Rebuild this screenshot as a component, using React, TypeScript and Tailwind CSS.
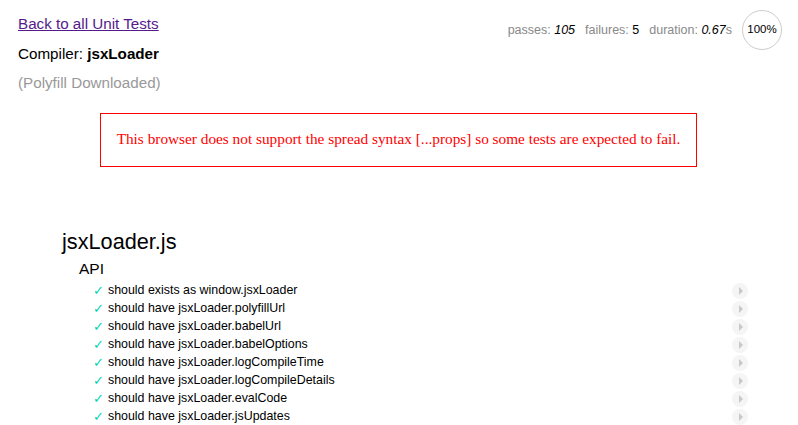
import React from "react";

const tests = [
  "should exists as window.jsxLoader",
  "should have jsxLoader.polyfillUrl",
  "should have jsxLoader.babelUrl",
  "should have jsxLoader.babelOptions",
  "should have jsxLoader.logCompileTime",
  "should have jsxLoader.logCompileDetails",
  "should have jsxLoader.evalCode",
  "should have jsxLoader.jsUpdates",
];

export default function App() {
  return (
    <div className="w-[798px] h-[425px] overflow-hidden bg-white font-['Liberation_Sans',Arial,sans-serif] text-black">
      <div className="flex justify-between">
        <div className="pl-[18px] pt-[9px] text-[15.2px] leading-[29.5px]">
          <div>
            <a href="#" className="text-[#551a8b] underline">Back to all Unit Tests</a>
          </div>
          <div>
            Compiler: <b>jsxLoader</b>
          </div>
          <div className="text-[#999]">(Polyfill Downloaded)</div>
        </div>
        <div className="flex items-center pt-[10px] pr-[16px] h-[50px] text-[12.5px] text-[#888]">
          <span>passes: <em className="text-black">105</em></span>
          <span className="ml-[10px]">failures: <em className="text-black not-italic">5</em></span>
          <span className="ml-[10px]">duration: <em className="text-black">0.67</em>s</span>
          <div className="ml-[10px] w-[40px] h-[40px] rounded-full border border-[#ccc] flex items-center justify-center text-[11.5px] text-black">
            100%
          </div>
        </div>
      </div>
      <div className="ml-[100px] mt-[15px] w-[597px] h-[54px] border border-[#f00] flex items-center justify-center font-['Liberation_Serif','Times_New_Roman',serif] text-[15.3px] text-[#f00]">
        This browser does not support the spread syntax [...props] so some tests are expected to fail.
      </div>
      <div className="ml-[62px] mt-[62px] w-[686px]">
        <div className="text-[21.7px] leading-[26px]">jsxLoader.js</div>
        <div className="ml-[17px] mt-[4px] text-[15.5px] leading-[20px]">API</div>
        <div className="mt-[3px]">
          {tests.map((t) => (
            <div key={t} className="flex items-center h-[18px] pl-[31px]">
              <span className="text-[#00d6b2] text-[13px] w-[15px] font-['DejaVu_Sans',sans-serif] font-light">✓</span>
              <span className="text-[12.4px]">{t}</span>
              <span className="ml-auto w-[16px] h-[16px] rounded-full bg-[#f5f5f5] flex items-center justify-center">
                <span className="ml-[2px] w-0 h-0 border-y-[4px] border-y-transparent border-l-[4px] border-l-[#c8c8c8]" />
              </span>
            </div>
          ))}
        </div>
      </div>
    </div>
  );
}
